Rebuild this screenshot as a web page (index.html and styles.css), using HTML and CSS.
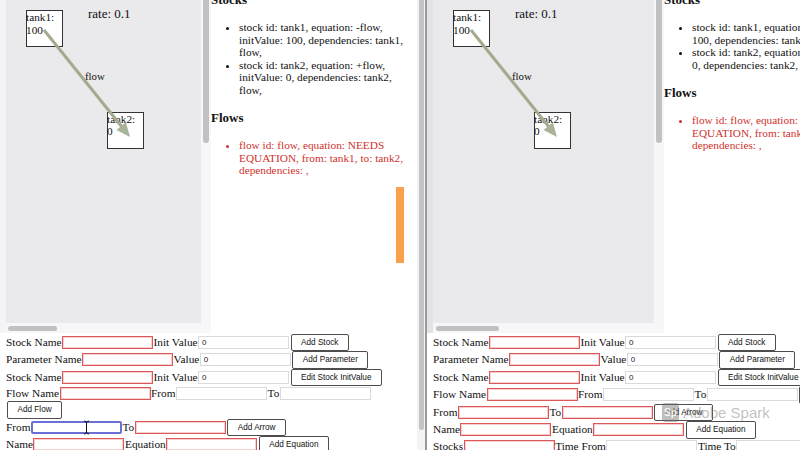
FILE: index.html
```html
<!DOCTYPE html>
<html>
<head>
<meta charset="utf-8">
<link rel="stylesheet" href="styles.css">
</head>
<body>
<div class="screen">
  <div class="win win-left">
    <div class="top">
      <div class="canvas">
        <div class="board">
          <svg class="diagram" width="221" height="160" viewBox="0 0 221 160">
            <rect x="20.5" y="10.5" width="36" height="36" fill="#fff" stroke="#333"/>
            <rect x="101.5" y="112.5" width="36" height="36" fill="#fff" stroke="#333"/>
            <text x="20" y="21">tank1:</text><text x="20" y="34">100</text>
            <text x="101" y="123">tank2:</text><text x="101" y="135">0</text>
            <text x="82" y="18" class="rate">rate: 0.1</text>
            <text x="79" y="80" class="flowlbl">flow</text>
            <line x1="38" y1="30" x2="116" y2="127" stroke="#a3aa8e" stroke-width="3"/>
            <polygon points="124,137 110.5,129.9 119.9,122.3" fill="#a9b399"/>
          </svg>
        </div>
        <div class="vtrack"><div class="vthumb"></div></div>
        <div class="htrack"><div class="hthumb"></div></div>
        <div class="corner"></div>
      </div>
      <div class="info">
        <h3>Stocks</h3>
        <ul>
          <li>stock id: tank1, equation: -flow, initValue: 100, dependencies: tank1, flow,</li>
          <li>stock id: tank2, equation: +flow, initValue: 0, dependencies: tank2, flow,</li>
        </ul>
        <h3>Flows</h3>
        <ul class="flows">
          <li>flow id: flow, equation: NEEDS EQUATION, from: tank1, to: tank2, dependencies: ,</li>
        </ul>
        <div class="orange"></div>
      </div>
    </div>
    <div class="form">
      <div class="row"><span class="lbl">Stock Name</span><input class="in req"><span class="lbl">Init Value</span><input class="in" value="0"><button class="btn">Add Stock</button></div>
      <div class="row"><span class="lbl">Parameter Name</span><input class="in req"><span class="lbl">Value</span><input class="in" value="0"><button class="btn">Add Parameter</button></div>
      <div class="row"><span class="lbl">Stock Name</span><input class="in req"><span class="lbl">Init Value</span><input class="in" value="0"><button class="btn">Edit Stock InitValue</button></div>
      <div class="row"><span class="lbl">Flow Name</span><input class="in req"><span class="lbl">From</span><input class="in"><span class="lbl">To</span><input class="in"><button class="btn">Add Flow</button></div>
      <div class="row"><span class="lbl">From</span><span class="fwrap"><input class="in focus"><svg class="ibeam" width="7" height="15" viewBox="0 0 7 15"><path d="M1 1 Q3.5 1 3.5 3 Q3.5 1 6 1 M3.5 3 V12 M1 14 Q3.5 14 3.5 12 Q3.5 14 6 14" fill="none" stroke="#111" stroke-width="1"/></svg></span><span class="lbl">To</span><input class="in req"><button class="btn">Add Arrow</button></div>
      <div class="row"><span class="lbl">Name</span><input class="in req"><span class="lbl">Equation</span><input class="in req"><button class="btn">Add Equation</button></div>
      <div class="row"><span class="lbl">Stocks</span><input class="in req"><span class="lbl">Time From</span><input class="in"><span class="lbl">Time To</span><input class="in"></div>
    </div>
  </div>
  <div class="pagebar"><div class="pthumb"></div></div>
  <div class="sep"></div>
  <div class="win win-right">
    <div class="top">
      <div class="canvas">
        <div class="board">
          <svg class="diagram" width="221" height="160" viewBox="0 0 221 160">
            <rect x="20.5" y="10.5" width="36" height="36" fill="#fff" stroke="#333"/>
            <rect x="101.5" y="112.5" width="36" height="36" fill="#fff" stroke="#333"/>
            <text x="20" y="21">tank1:</text><text x="20" y="34">100</text>
            <text x="101" y="123">tank2:</text><text x="101" y="135">0</text>
            <text x="82" y="18" class="rate">rate: 0.1</text>
            <text x="79" y="80" class="flowlbl">flow</text>
            <line x1="38" y1="30" x2="116" y2="127" stroke="#a3aa8e" stroke-width="3"/>
            <polygon points="124,137 110.5,129.9 119.9,122.3" fill="#a9b399"/>
          </svg>
        </div>
        <div class="vtrack"><div class="vthumb"></div></div>
        <div class="htrack"><div class="hthumb"></div></div>
        <div class="corner"></div>
      </div>
      <div class="info">
        <h3>Stocks</h3>
        <ul>
          <li>stock id: tank1, equation: -flow, initValue: 100, dependencies: tank1, flow,</li>
          <li>stock id: tank2, equation: +flow, initValue: 0, dependencies: tank2, flow,</li>
        </ul>
        <h3>Flows</h3>
        <ul class="flows">
          <li>flow id: flow, equation: NEEDS EQUATION, from: tank1, to: tank2, dependencies: ,</li>
        </ul>
      </div>
    </div>
    <div class="form">
      <div class="row"><span class="lbl">Stock Name</span><input class="in req"><span class="lbl">Init Value</span><input class="in" value="0"><button class="btn">Add Stock</button></div>
      <div class="row"><span class="lbl">Parameter Name</span><input class="in req"><span class="lbl">Value</span><input class="in" value="0"><button class="btn">Add Parameter</button></div>
      <div class="row"><span class="lbl">Stock Name</span><input class="in req"><span class="lbl">Init Value</span><input class="in" value="0"><button class="btn">Edit Stock InitValue</button></div>
      <div class="row"><span class="lbl">Flow Name</span><input class="in req"><span class="lbl">From</span><input class="in"><span class="lbl">To</span><input class="in"><button class="btn">Add Flow</button></div>
      <div class="row"><span class="lbl">From</span><input class="in req"><span class="lbl">To</span><input class="in req"><button class="btn">Add Arrow</button></div>
      <div class="row"><span class="lbl">Name</span><input class="in req"><span class="lbl">Equation</span><input class="in req"><button class="btn">Add Equation</button></div>
      <div class="row"><span class="lbl">Stocks</span><input class="in req"><span class="lbl">Time From</span><input class="in"><span class="lbl">Time To</span><input class="in"></div>
    </div>
  </div>
  <div class="wm"><div class="wm-logo">Sp</div><div class="wm-text">Adobe Spark</div></div>
</div>
</body>
</html>
```
FILE: styles.css
```css
html, body {
  margin: 0;
  padding: 0;
}
body {
  width: 800px;
  height: 450px;
  overflow: hidden;
  background: #fff;
  font-family: "Liberation Serif", "Times New Roman", serif;
  color: #111;
}
.screen {
  display: flex;
  width: 800px;
  height: 450px;
  overflow: hidden;
  position: relative;
}
.win {
  flex: none;
  height: 450px;
  overflow: hidden;
  background: #fff;
  display: flex;
  flex-direction: column;
}
.win-left { width: 417px; }
.win-right { width: 468px; }
.pagebar {
  flex: none;
  width: 8px;
  background: #f4f4f5;
}
.pthumb {
  margin-left: 2px;
  width: 5px;
  height: 430px;
  background: #c4c4c6;
  border-radius: 0 0 3px 3px;
}
.sep {
  flex: none;
  width: 2px;
  background: #9a9a9c;
}
.top {
  flex: none;
  display: grid;
  height: 333px;
  padding-left: 6px;
  background: #f4f3f5;
}
.win-left .top { grid-template-columns: 205px 1fr; }
.win-right .top { grid-template-columns: 231px 1fr; background: #e3e3e5; }
.canvas {
  display: grid;
  grid-template-columns: 1fr 10px;
  grid-template-rows: 323px 10px;
  background: #f7f6f8;
}
.board {
  background: #eae9ec;
  overflow: hidden;
}
.diagram { display: block; }
.diagram text {
  font-family: "Liberation Serif", serif;
  font-size: 11.3px;
  fill: #111;
}
.diagram .rate { font-size: 13px; }
.diagram .flowlbl { font-size: 10.8px; }
.vthumb {
  margin-left: 2px;
  width: 6px;
  height: 143px;
  background: #c1c0c3;
  border-radius: 0 0 3px 3px;
}
.htrack { padding-top: 3px; }
.hthumb {
  margin-left: 2px;
  width: 49px;
  height: 5px;
  border-radius: 3px;
  background: #c1c0c3;
}
.win-right .hthumb { margin-left: 3px; width: 63px; }
.info {
  background: #fff;
  position: relative;
  overflow: hidden;
  padding-right: 6px;
  font-size: 11.3px;
  line-height: 12.5px;
}
.info h3 {
  font-size: 13px;
  line-height: 15px;
  margin: 14px 0;
  font-weight: bold;
}
.info h3:first-child { margin-top: -8px; }
.info ul {
  margin: 14px 0;
  padding-left: 28px;
}
.info .flows { color: #d0312d; }
.orange {
  position: absolute;
  left: 185px;
  top: 187px;
  width: 8px;
  height: 76px;
  background: #f8a04b;
}
.form {
  padding: 0.5px 6px 0;
  font-size: 11.3px;
}
.row {
  display: flex;
  flex-wrap: wrap;
  align-items: center;
}
.lbl {
  line-height: 15px;
  white-space: nowrap;
}
.in {
  box-sizing: border-box;
  width: 91px;
  height: 13px;
  margin: 0 0.5px;
  padding: 0 3px;
  border: 1px solid #dadada;
  border-radius: 0;
  background: #fff;
  font: 8px "Liberation Sans", Arial, sans-serif;
  color: #222;
  outline: none;
}
.in.req {
  border-color: #dd5858;
  box-shadow: inset 0 0 0 1px rgba(236, 150, 150, 0.45);
}
.in.focus {
  border: 2px solid #6c70d4;
  border-radius: 2px;
}
.fwrap {
  position: relative;
  display: flex;
}
.ibeam {
  position: absolute;
  left: 53px;
  top: -1px;
}
.btn {
  box-sizing: border-box;
  height: 17.5px;
  margin: 0 1px;
  padding: 0 9.5px;
  border: 1px solid #4d4d4d;
  border-radius: 2px;
  background: #fff;
  font: 8.2px "Liberation Sans", Arial, sans-serif;
  color: #111;
  white-space: nowrap;
}
.wm {
  position: absolute;
  left: 662px;
  top: 403px;
  display: flex;
  align-items: center;
  gap: 4px;
}
.wm-logo {
  width: 17px;
  height: 19px;
  border-radius: 3px;
  background: rgba(110, 110, 110, 0.45);
  color: rgba(255, 255, 255, 0.9);
  font: bold 10px "Liberation Sans", Arial, sans-serif;
  display: flex;
  align-items: center;
  justify-content: center;
}
.wm-text {
  font: 15px "Liberation Sans", Arial, sans-serif;
  color: rgba(140, 140, 140, 0.55);
}
```
